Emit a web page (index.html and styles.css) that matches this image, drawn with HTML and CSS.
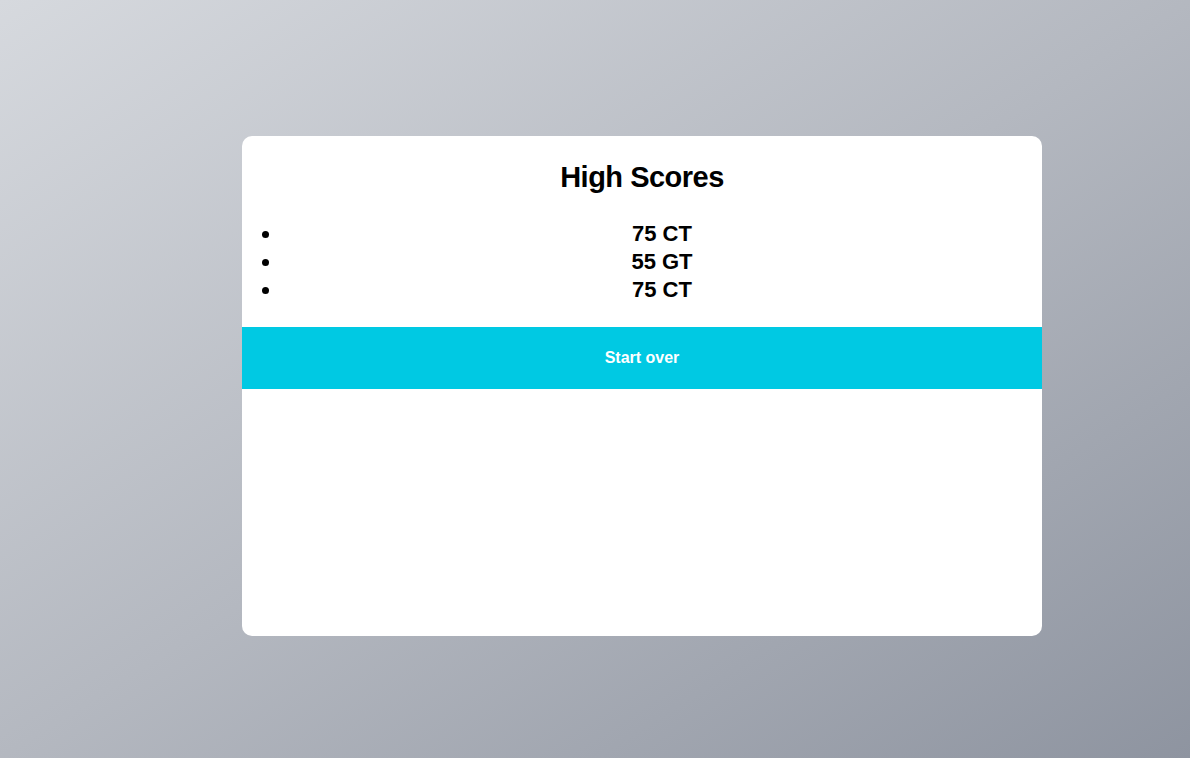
FILE: index.html
```html
<!DOCTYPE html>
<html lang="en">
<head>
<meta charset="utf-8">
<title>High Scores</title>
<link rel="stylesheet" href="styles.css">
</head>
<body>
<main class="page">
  <section class="card">
    <h1 class="card-title">High Scores</h1>
    <ul class="score-list">
      <li class="score-item">75 CT</li>
      <li class="score-item">55 GT</li>
      <li class="score-item">75 CT</li>
    </ul>
    <button class="start-btn" type="button">Start over</button>
  </section>
</main>
</body>
</html>
```

FILE: styles.css
```css
html, body {
  margin: 0;
  padding: 0;
  height: 100%;
}

body {
  font-family: "Liberation Sans", Arial, sans-serif;
  background: linear-gradient(to bottom right, #d6d9de 0%, #b4b8c0 50%, #8e94a0 100%);
  min-height: 758px;
}

.page {
  padding: 136px 0 0 242px;
}

.card {
  width: 800px;
  height: 500px;
  background: #ffffff;
  border-radius: 10px;
  overflow: hidden;
  display: flex;
  flex-direction: column;
}

.card-title {
  margin: 24px 0 0;
  font-size: 29px;
  line-height: 34px;
  font-weight: 700;
  letter-spacing: -0.5px;
  text-align: center;
  color: #000;
}

.score-list {
  margin: 26px 0 0;
  padding: 0 0 0 40px;
  list-style: disc;
}

.score-item {
  font-size: 22px;
  line-height: 28px;
  font-weight: 700;
  text-align: center;
  color: #000;
}

.start-btn {
  margin-top: 23px;
  height: 62px;
  width: 100%;
  border: 0;
  background: #00c9e3;
  color: #ffffff;
  font-family: "Liberation Sans", Arial, sans-serif;
  font-size: 16px;
  font-weight: 700;
  cursor: pointer;
}
```
